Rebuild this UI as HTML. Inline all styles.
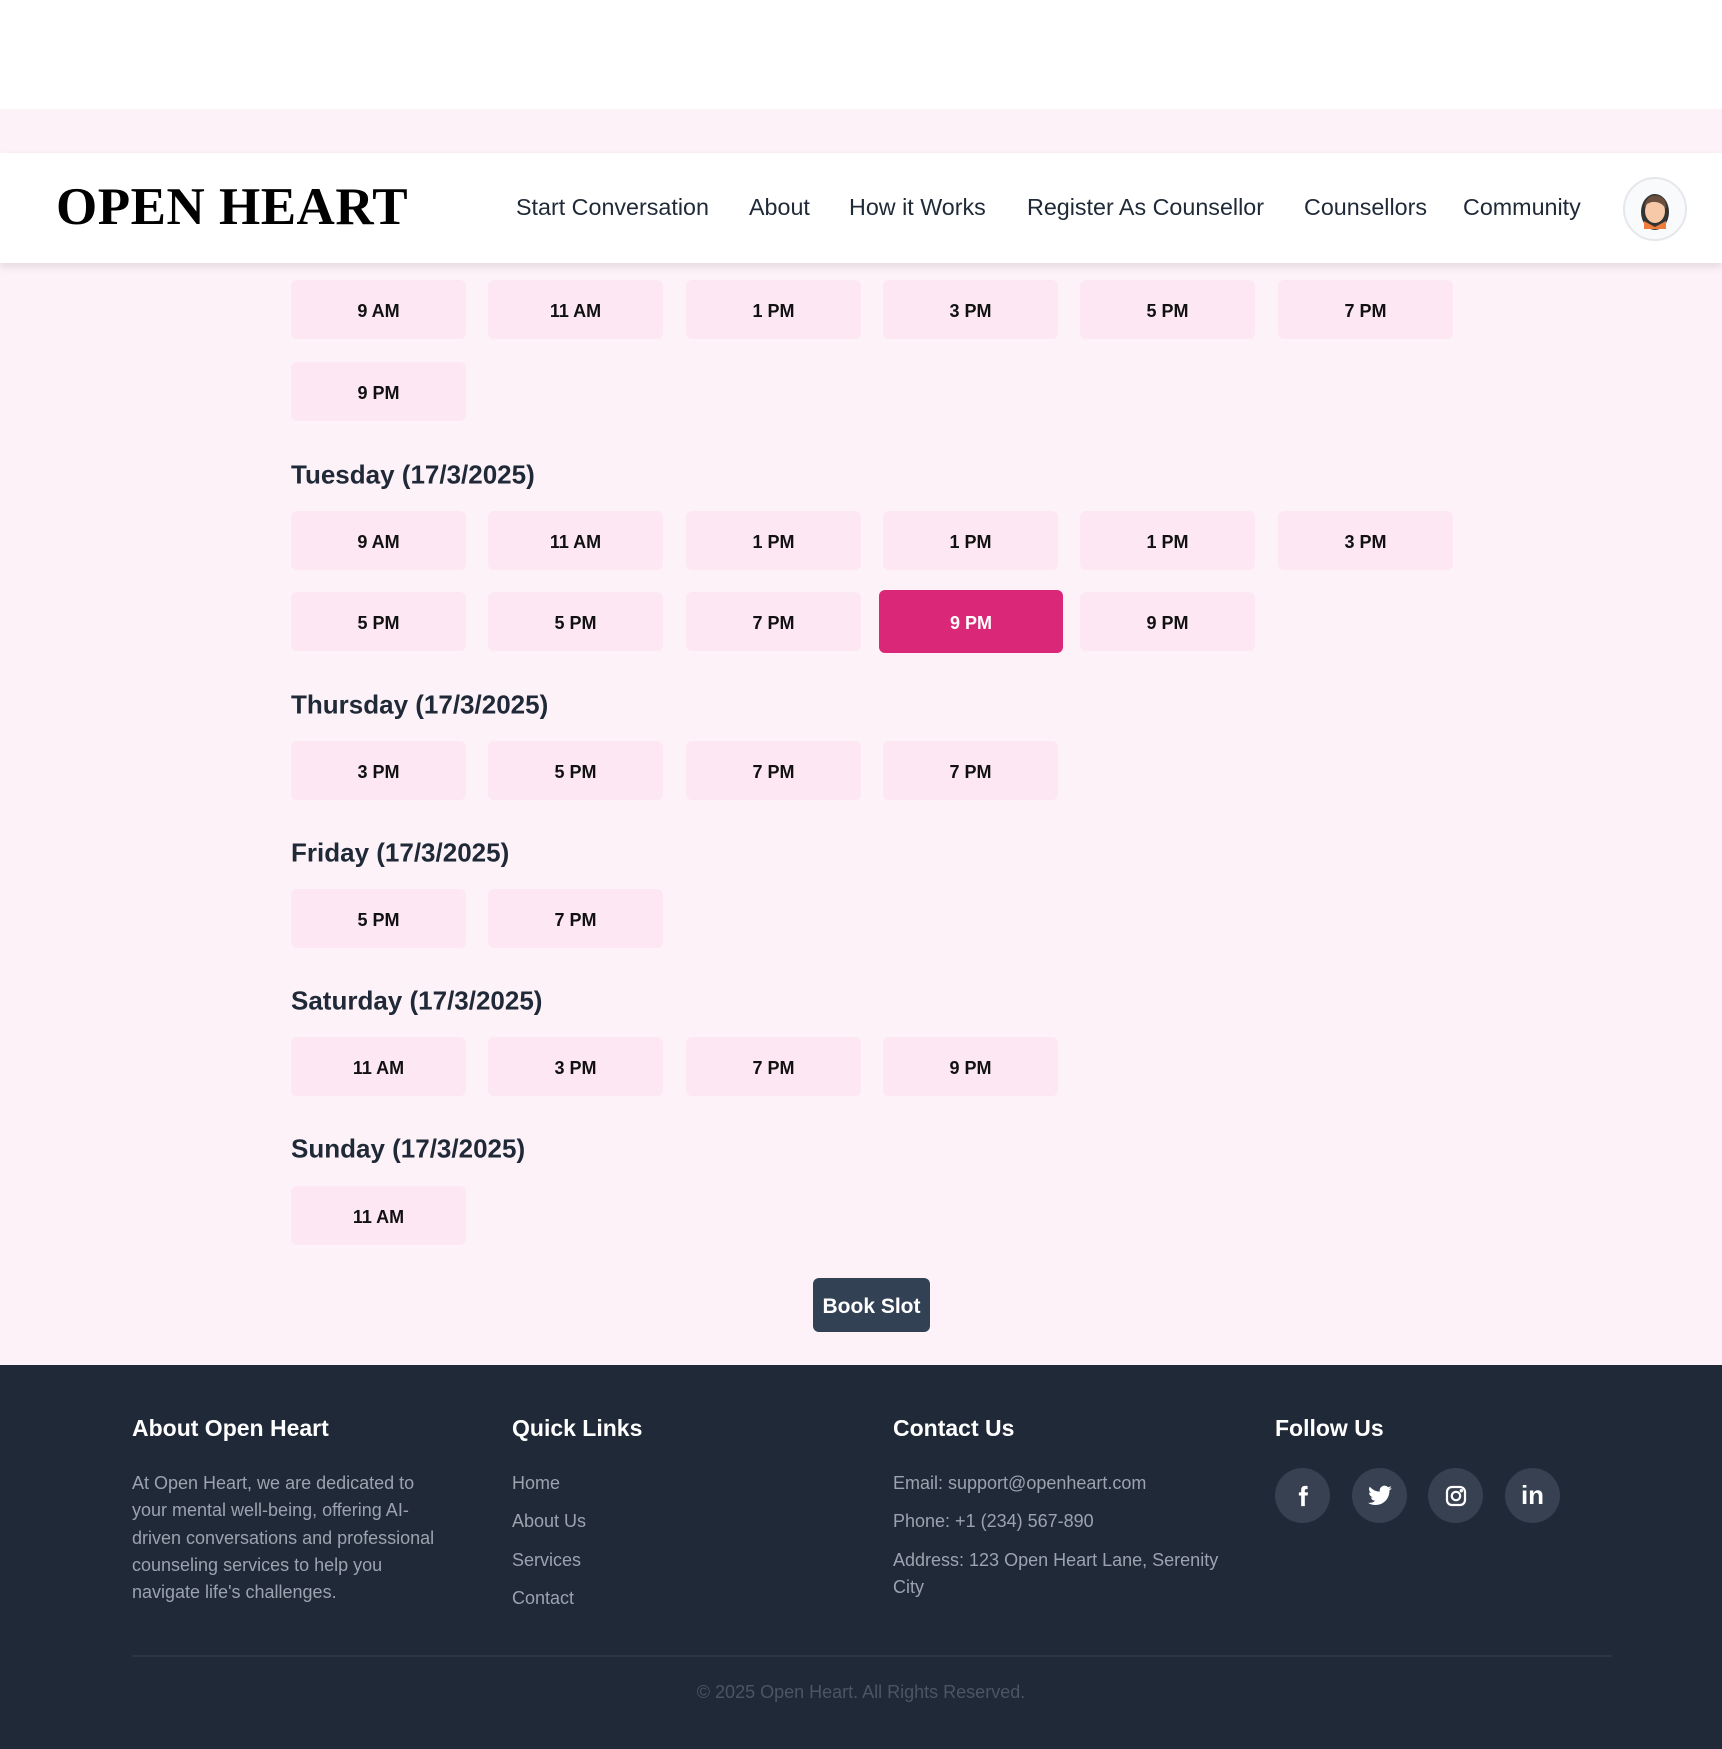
<!DOCTYPE html>
<html><head><meta charset="utf-8"><style>
*{margin:0;padding:0;box-sizing:border-box}
body{width:1722px;height:1749px;position:relative;background:#fff;font-family:"Liberation Sans",sans-serif;overflow:hidden}
.a{position:absolute}
.pink{left:0;top:109px;width:1722px;height:1256px;background:#fdf2f8}
.hdr{left:0;top:153px;width:1722px;height:110px;background:#fff;box-shadow:0 4px 8px rgba(0,0,0,.1)}
.logo{left:56px;top:177px;font-family:"Liberation Serif",serif;font-weight:bold;font-size:53px;color:#000;letter-spacing:0.5px}
.nav{top:194px;font-size:23.3px;color:#1f2937}
.av{left:1623px;top:177px;width:64px;height:64px;border-radius:50%;border:2px solid #e5e7eb;background:#f9fafb}
.s{width:175px;height:59px;background:#fce7f3;border-radius:6px;font-weight:bold;font-size:18px;color:#111;display:flex;align-items:center;justify-content:center;padding-top:4px}
.sel{background:#db2777;color:#fff;width:184px;height:63px}
.h{font-size:26px;color:#1f2937;font-weight:bold;transform:translateY(-50%)}
.ft{left:0;top:1365px;width:1722px;height:384px;background:#1f2937}
.fh{top:1415px;font-size:23px;font-weight:bold;color:#fff}
.fp{font-size:18px;color:#9ca3af;line-height:27.3px}
.soc{width:55px;height:55px;border-radius:50%;background:#374151;display:flex;align-items:center;justify-content:center;color:#fff;top:1468px}
</style></head><body>
<div class="a pink"></div>
<div class="a hdr"></div>
<div class="a logo">OPEN HEART</div>
<div class="a nav" style="left:516px">Start Conversation</div>
<div class="a nav" style="left:749px">About</div>
<div class="a nav" style="left:849px">How it Works</div>
<div class="a nav" style="left:1027px">Register As Counsellor</div>
<div class="a nav" style="left:1304px">Counsellors</div>
<div class="a nav" style="left:1463px">Community</div>
<div class="a av"><svg width="60" height="60" viewBox="0 0 60 60"><ellipse cx="30" cy="33" rx="14" ry="18" fill="#333"/><path d="M19 42 L30 48 L41 42 L41 50 L19 50Z" fill="#f07c3c"/><ellipse cx="30" cy="32" rx="10" ry="12" fill="#f7c9a8"/><path d="M19 28 Q22 14 34 17 Q42 20 41 30 Q36 22 27 23 Q22 24 19 28Z" fill="#6b4f3f"/></svg></div>

<div class="a s" style="left:291px;top:280px">9 AM</div>
<div class="a s" style="left:488px;top:280px">11 AM</div>
<div class="a s" style="left:686px;top:280px">1 PM</div>
<div class="a s" style="left:883px;top:280px">3 PM</div>
<div class="a s" style="left:1080px;top:280px">5 PM</div>
<div class="a s" style="left:1278px;top:280px">7 PM</div>
<div class="a s" style="left:291px;top:362px">9 PM</div>

<div class="a h" style="left:291px;top:475px">Tuesday (17/3/2025)</div>
<div class="a s" style="left:291px;top:511px">9 AM</div>
<div class="a s" style="left:488px;top:511px">11 AM</div>
<div class="a s" style="left:686px;top:511px">1 PM</div>
<div class="a s" style="left:883px;top:511px">1 PM</div>
<div class="a s" style="left:1080px;top:511px">1 PM</div>
<div class="a s" style="left:1278px;top:511px">3 PM</div>
<div class="a s" style="left:291px;top:592px">5 PM</div>
<div class="a s" style="left:488px;top:592px">5 PM</div>
<div class="a s" style="left:686px;top:592px">7 PM</div>
<div class="a s sel" style="left:879px;top:590px">9 PM</div>
<div class="a s" style="left:1080px;top:592px">9 PM</div>

<div class="a h" style="left:291px;top:705px">Thursday (17/3/2025)</div>
<div class="a s" style="left:291px;top:741px">3 PM</div>
<div class="a s" style="left:488px;top:741px">5 PM</div>
<div class="a s" style="left:686px;top:741px">7 PM</div>
<div class="a s" style="left:883px;top:741px">7 PM</div>

<div class="a h" style="left:291px;top:853px">Friday (17/3/2025)</div>
<div class="a s" style="left:291px;top:889px">5 PM</div>
<div class="a s" style="left:488px;top:889px">7 PM</div>

<div class="a h" style="left:291px;top:1001px">Saturday (17/3/2025)</div>
<div class="a s" style="left:291px;top:1037px">11 AM</div>
<div class="a s" style="left:488px;top:1037px">3 PM</div>
<div class="a s" style="left:686px;top:1037px">7 PM</div>
<div class="a s" style="left:883px;top:1037px">9 PM</div>

<div class="a h" style="left:291px;top:1149px">Sunday (17/3/2025)</div>
<div class="a s" style="left:291px;top:1186px">11 AM</div>

<div class="a" style="left:813px;top:1278px;width:117px;height:54px;background:#334155;border-radius:6px;color:#fff;font-weight:bold;font-size:21px;display:flex;align-items:center;justify-content:center;padding-top:3px">Book Slot</div>

<div class="a ft"></div>
<div class="a fh" style="left:132px">About Open Heart</div>
<div class="a fh" style="left:512px">Quick Links</div>
<div class="a fh" style="left:893px">Contact Us</div>
<div class="a fh" style="left:1275px">Follow Us</div>
<div class="a fp" style="left:132px;top:1470px;width:318px">At Open Heart, we are dedicated to your mental well-being, offering AI-driven conversations and professional counseling services to help you navigate life's challenges.</div>
<div class="a fp" style="left:512px;top:1470px">Home</div>
<div class="a fp" style="left:512px;top:1508px">About Us</div>
<div class="a fp" style="left:512px;top:1547px">Services</div>
<div class="a fp" style="left:512px;top:1585px">Contact</div>
<div class="a fp" style="left:893px;top:1470px">Email: support@openheart.com</div>
<div class="a fp" style="left:893px;top:1508px">Phone: +1 (234) 567-890</div>
<div class="a fp" style="left:893px;top:1547px;width:350px">Address: 123 Open Heart Lane, Serenity City</div>
<div class="a soc" style="left:1275px"><svg width="22" height="22" viewBox="0 0 24 24"><path d="M14 8V6c0-1 .5-1.5 1.5-1.5H17V1h-3c-3 0-4 2-4 4.5V8H7.5v3.5H10V23h4V11.5h3l.5-3.5z" fill="#fff"/></svg></div>
<div class="a soc" style="left:1352px"><svg width="26" height="26" viewBox="0 0 24 24"><path d="M23 4.6a9 9 0 0 1-2.6.7 4.5 4.5 0 0 0 2-2.5 9 9 0 0 1-2.9 1.1 4.5 4.5 0 0 0-7.7 4.1A12.8 12.8 0 0 1 2.5 3.300a4.5 4.5 0 0 0 1.4 6 4.5 4.5 0 0 1-2-.6 4.5 4.5 0 0 0 3.6 4.5 4.5 4.5 0 0 1-2 .1 4.5 4.5 0 0 0 4.2 3.1A9 9 0 0 1 1 18.3 12.8 12.8 0 0 0 7.9 20.3c8.3 0 12.8-6.9 12.8-12.8v-.6A9 9 0 0 0 23 4.6z" fill="#fff"/></svg></div>
<div class="a soc" style="left:1428px"><svg width="24" height="24" viewBox="0 0 24 24" fill="none" stroke="#fff" stroke-width="2.2"><rect x="3" y="3" width="18" height="18" rx="5"/><circle cx="12" cy="12" r="4.2"/><circle cx="17.3" cy="6.7" r=".6" fill="#fff"/></svg></div>
<div class="a soc" style="left:1505px;font-weight:bold;font-size:26px">in</div>
<div class="a" style="left:132px;top:1655px;width:1480px;height:2px;background:#2b3544"></div>
<div class="a" style="left:0;top:1682px;width:1722px;text-align:center;font-size:18px;color:#4b5563">© 2025 Open Heart. All Rights Reserved.</div>
</body></html>
